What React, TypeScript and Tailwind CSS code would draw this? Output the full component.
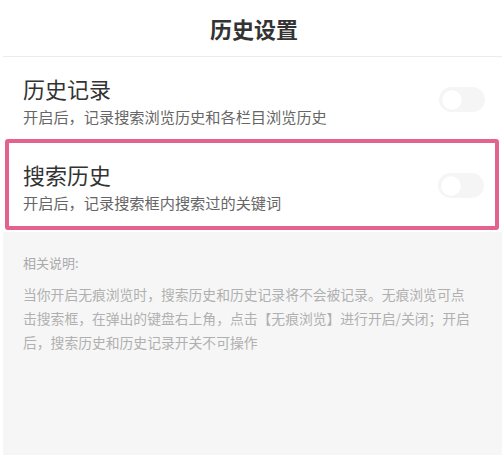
import React from 'react';

const Toggle = () => (
  <div className="w-[46px] h-[25px] rounded-full bg-[#f5f5f5] flex items-center px-[3px]">
    <div className="w-[20px] h-[20px] rounded-full bg-white shadow-[0_0_1px_rgba(0,0,0,0.05)]" />
  </div>
);

const SettingRow = ({ title, desc }: { title: string; desc: string }) => (
  <div className="flex items-center justify-between">
    <div className="flex flex-col">
      <span className="text-[22px] leading-[30px] text-[#333]">{title}</span>
      <span className="text-[15.2px] leading-[20px] text-[#666] mt-[3px]">{desc}</span>
    </div>
    <Toggle />
  </div>
);

export default function App() {
  return (
    <div
      className="w-[502px] h-[455px] bg-white pl-[3px] flex flex-col overflow-hidden"
      style={{ fontFamily: '"Noto Sans CJK SC", "Noto Sans", sans-serif' }}
    >
      <div className="h-[57px] shrink-0 flex items-center justify-center border-b border-[#ececec]">
        <h1 className="text-[22px] font-bold text-[#333] pl-[3px]">历史设置</h1>
      </div>

      <div className="h-[82px] shrink-0 pl-[20px] pr-[17px] pt-[16px]">
        <SettingRow title="历史记录" desc="开启后，记录搜索浏览历史和各栏目浏览历史" />
      </div>

      <div className="ml-[2px] mr-[3px] h-[91px] shrink-0 border-4 border-[#e3628f] rounded-[3px] pl-[14px] pr-[11px] pt-[16px]">
        <SettingRow title="搜索历史" desc="开启后，记录搜索框内搜索过的关键词" />
      </div>

      <div className="mt-[2px] flex-1 bg-[#f6f6f6] px-[20px] pt-[21px]">
        <p className="text-[13px] leading-[20px] text-[#aaa]">相关说明:</p>
        <div className="mt-[9px] text-[13.8px] leading-[24px] text-[#b0b0b0]">
          <p className="whitespace-nowrap">当你开启无痕浏览时，搜索历史和历史记录将不会被记录。无痕浏览可点</p>
          <p className="whitespace-nowrap">击搜索框，在弹出的键盘右上角，点击【无痕浏览】进行开启/关闭；开启</p>
          <p className="whitespace-nowrap">后，搜索历史和历史记录开关不可操作</p>
        </div>
      </div>
    </div>
  );
}
